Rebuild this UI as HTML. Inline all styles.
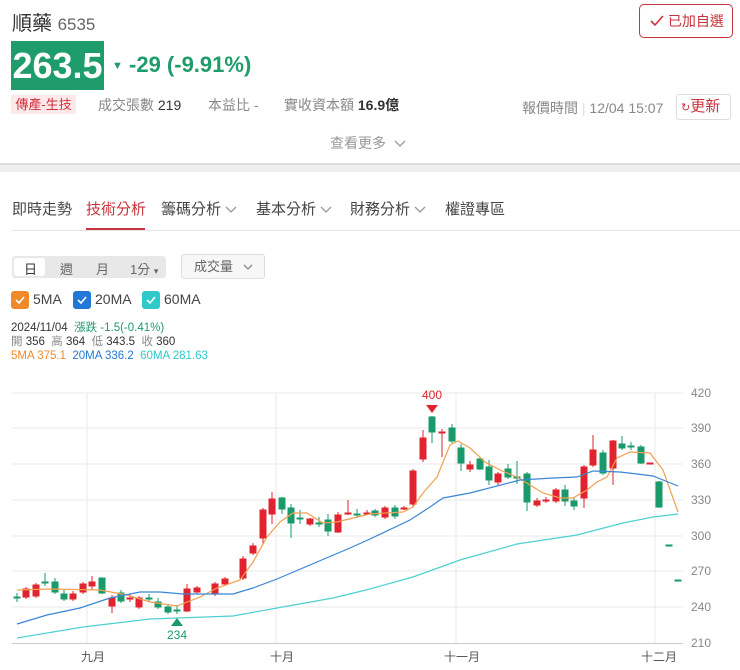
<!DOCTYPE html>
<html><head><meta charset="utf-8"><style>
*{margin:0;padding:0;box-sizing:border-box}
body{width:740px;height:670px;background:#fff;font-family:"Liberation Sans","Noto Sans CJK TC",sans-serif;position:relative;overflow:hidden;color:#333}
.a{position:absolute;white-space:nowrap}
.cb{position:absolute;width:18px;height:18px;border-radius:3px}
.cb svg{position:absolute;left:4px;top:5px}
</style></head><body>
<div class="a" style="left:12px;top:7px;font-size:20px;color:#333">順藥 <span style="font-size:17px;color:#666">6535</span></div>
<div class="a" style="left:639px;top:4px;width:94px;height:34px;border:1px solid #c8323c;border-radius:5px;color:#c8323c;font-size:14px;line-height:32px;padding-left:10px"><svg width="14" height="12" viewBox="0 0 14 12" style="vertical-align:-1px"><path d="M1 6 L5 10 L13 1" fill="none" stroke="#c8323c" stroke-width="1.6"/></svg> 已加自選</div>
<div class="a" style="left:11px;top:41px;width:93px;height:49px;background:#1e9c6c;color:#fff;font-size:36px;font-weight:bold;line-height:49px;text-align:center">263.5</div>
<div class="a" style="left:112px;top:52px;color:#1e9c6c;font-size:22px;font-weight:bold"><span style="font-size:11px;vertical-align:3px">▼</span> -29 (-9.91%)</div>
<div class="a" style="left:11px;top:95px;width:65px;height:19px;background:#fde8ea;color:#d0303c;font-size:13px;line-height:19px;text-align:center">傳產-生技</div>
<div class="a" style="left:98px;top:95px;font-size:14px;color:#888">成交張數 <span style="color:#333">219</span></div>
<div class="a" style="left:208px;top:95px;font-size:14px;color:#888">本益比 -</div>
<div class="a" style="left:284px;top:95px;font-size:14px;color:#888">實收資本額 <span style="color:#333;font-weight:bold">16.9億</span></div>
<div class="a" style="left:522px;top:98px;font-size:14px;color:#888">報價時間 <span style="color:#ddd">|</span> 12/04 15:07</div>
<div class="a" style="left:676px;top:94px;width:55px;height:26px;border:1px solid #ddd;border-radius:3px;font-size:15px;line-height:24px;color:#c8323c;padding-left:4px"><span style="font-size:11px">↻</span>更新</div>
<div class="a" style="left:330px;top:133px;font-size:14px;color:#999">查看更多 <svg width="12" height="8" viewBox="0 0 12 8" style="margin-left:4px"><path d="M1 1L6 6L11 1" fill="none" stroke="#999" stroke-width="1.3"/></svg></div>
<div class="a" style="left:0;top:163px;width:740px;height:9px;background:#eee;border-top:2px solid #ddd"></div>
<div class="a" style="left:12px;top:198px;font-size:15px;color:#444">即時走勢</div>
<div class="a" style="left:86px;top:198px;font-size:15px;color:#c8323c">技術分析</div>
<div class="a" style="left:86px;top:228px;width:59px;height:2px;background:#c8323c"></div>
<div class="a" style="left:161px;top:198px;font-size:15px;color:#444">籌碼分析 <svg width="12" height="8" viewBox="0 0 12 8"><path d="M1 1L6 6L11 1" fill="none" stroke="#999" stroke-width="1.3"/></svg></div>
<div class="a" style="left:256px;top:198px;font-size:15px;color:#444">基本分析 <svg width="12" height="8" viewBox="0 0 12 8"><path d="M1 1L6 6L11 1" fill="none" stroke="#999" stroke-width="1.3"/></svg></div>
<div class="a" style="left:350px;top:198px;font-size:15px;color:#444">財務分析 <svg width="12" height="8" viewBox="0 0 12 8"><path d="M1 1L6 6L11 1" fill="none" stroke="#999" stroke-width="1.3"/></svg></div>
<div class="a" style="left:445px;top:198px;font-size:15px;color:#444">權證專區</div>
<div class="a" style="left:12px;top:230px;width:728px;height:1px;background:#e5e5e5"></div>
<div class="a" style="left:12px;top:256px;width:154px;height:22px;background:#e8e8e8;border-radius:3px"></div>
<div class="a" style="left:14px;top:258px;width:31px;height:18px;background:#fff;border-radius:3px"></div>
<div class="a" style="left:24px;top:259px;font-size:13px;color:#333">日</div>
<div class="a" style="left:60px;top:259px;font-size:13px;color:#666">週</div>
<div class="a" style="left:96px;top:259px;font-size:13px;color:#666">月</div>
<div class="a" style="left:130px;top:259px;font-size:13px;color:#666">1分 <span style="font-size:9px">▾</span></div>
<div class="a" style="left:181px;top:254px;width:84px;height:25px;border:1px solid #ddd;border-radius:3px;background:#f7f7f7;font-size:13px;color:#666;line-height:23px;padding-left:12px">成交量 <svg width="10" height="7" viewBox="0 0 10 7" style="margin-left:6px"><path d="M1 1L5 5L9 1" fill="none" stroke="#888" stroke-width="1.3"/></svg></div>
<div class="cb" style="left:11px;top:291px;background:#f0892a"><svg width="10" height="8" viewBox="0 0 10 8"><path d="M1 4L4 7L9 1" fill="none" stroke="#fff" stroke-width="1.6"/></svg></div>
<div class="a" style="left:33px;top:291px;font-size:14px;color:#444">5MA</div>
<div class="cb" style="left:73px;top:291px;background:#2178d6"><svg width="10" height="8" viewBox="0 0 10 8"><path d="M1 4L4 7L9 1" fill="none" stroke="#fff" stroke-width="1.6"/></svg></div>
<div class="a" style="left:95px;top:291px;font-size:14px;color:#444">20MA</div>
<div class="cb" style="left:142px;top:291px;background:#2ec9c9"><svg width="10" height="8" viewBox="0 0 10 8"><path d="M1 4L4 7L9 1" fill="none" stroke="#fff" stroke-width="1.6"/></svg></div>
<div class="a" style="left:164px;top:291px;font-size:14px;color:#444">60MA</div>
<div class="a" style="left:11px;top:321px;font-size:11.5px;color:#333;line-height:14px">2024/11/04 &nbsp;<span style="color:#1e9c6c">漲跌 -1.5(-0.41%)</span><br><span style="color:#888">開</span> 356 &nbsp;<span style="color:#888">高</span> 364 &nbsp;<span style="color:#888">低</span> 343.5 &nbsp;<span style="color:#888">收</span> 360<br><span style="color:#f0892a">5MA 375.1</span> &nbsp;<span style="color:#2178d6">20MA 336.2</span> &nbsp;<span style="color:#2ec9c9">60MA 281.63</span></div>
<svg class="a" style="left:0;top:380px" width="740" height="290" viewBox="0 380 740 290">
<g stroke="#e8e8ea" stroke-width="1">
<path d="M12 393H683M12 428H683M12 464H683M12 500H683M12 536H683M12 571H683M12 607H683"/>
<path d="M87 393V643M276 393V643M456 393V643M655 393V643"/>
</g>
<path d="M12 643.5H683" stroke="#ccc"/>
<g font-size="12" fill="#888" font-family="Liberation Sans,sans-serif">
<text x="691" y="397">420</text><text x="691" y="432">390</text><text x="691" y="468">360</text><text x="691" y="504">330</text><text x="691" y="540">300</text><text x="691" y="575">270</text><text x="691" y="611">240</text><text x="691" y="647">210</text>
</g>
<g font-size="12" fill="#555" font-family="Liberation Sans,Noto Sans CJK TC,sans-serif" text-anchor="middle">
<text x="93" y="661">九月</text><text x="282" y="661">十月</text><text x="462" y="661">十一月</text><text x="659" y="661">十二月</text>
</g>
<g fill="#e0232e" stroke="#e0232e" stroke-width="1">
<path d="M26 587V599M36 583V598M73 591V601M83 582V594M92 576V590M112 595V613M130 594V602M139 596V609M187 584V612M197 586V594M215 582V596M225 577V586M243 556V580M253 543V555M263 508V544M272 492V524M310 518V526M338 512V533M348 500V515M367 510V515M385 506V519M404 506V510M413 469V507M423 430V462M442 429V457M470 461V472M498 472V485M537 498V507M546 497V503M556 488V503M584 465V508M593 435V467M613 440V485M650 463V464"/>
<rect x="23" y="589" width="6" height="8"/><rect x="33" y="585" width="6" height="11"/><rect x="70" y="594" width="6" height="5"/><rect x="80" y="584" width="6" height="8"/><rect x="89" y="582" width="6" height="4"/><rect x="109" y="598" width="6" height="8"/><rect x="127" y="598" width="6" height="1"/><rect x="136" y="598" width="6" height="9"/><rect x="184" y="589" width="6" height="22"/><rect x="194" y="588" width="6" height="4"/><rect x="212" y="584" width="6" height="10"/><rect x="222" y="579" width="6" height="5"/><rect x="240" y="559" width="6" height="19"/><rect x="250" y="546" width="6" height="7"/><rect x="260" y="510" width="6" height="28"/><rect x="269" y="499" width="6" height="15"/><rect x="307" y="519" width="6" height="5"/><rect x="335" y="515" width="6" height="17"/><rect x="345" y="513" width="6" height="1"/><rect x="364" y="513" width="6" height="1"/><rect x="382" y="508" width="6" height="9"/><rect x="401" y="508" width="6" height="1"/><rect x="410" y="471" width="6" height="33"/><rect x="420" y="438" width="6" height="21"/><rect x="439" y="432" width="6" height="1"/><rect x="467" y="465" width="6" height="4"/><rect x="495" y="474" width="6" height="8"/><rect x="534" y="501" width="6" height="4"/><rect x="543" y="500" width="6" height="1"/><rect x="553" y="490" width="6" height="11"/><rect x="581" y="467" width="6" height="31"/><rect x="590" y="450" width="6" height="15"/><rect x="610" y="441" width="6" height="27"/><rect x="647" y="463" width="6" height="1"/>
</g>
<g fill="#1a9a6a" stroke="#1a9a6a" stroke-width="1">
<path d="M17 593V602M45 573V586M55 578V594M64 590V601M102 578V594M121 590V603M149 594V602M158 598V609M168 604V614M177 605V614M282 497V514M291 504V538M300 510V524M319 517V527M328 514V536M357 509V518M375 509V517M395 505V519M432 416V443M452 424V443M461 444V471M480 458V470M489 460V485M508 464V479M517 461V484M527 472V511M565 485V506M574 498V510M603 450V475M622 436V450M631 442V450M641 445V464M659 481V508M669 545V546M678 580V581"/>
<rect x="14" y="597" width="6" height="1"/><rect x="42" y="582" width="6" height="1"/><rect x="52" y="582" width="6" height="10"/><rect x="61" y="594" width="6" height="5"/><rect x="99" y="578" width="6" height="15"/><rect x="118" y="593" width="6" height="8"/><rect x="146" y="598" width="6" height="1"/><rect x="155" y="602" width="6" height="5"/><rect x="165" y="607" width="6" height="5"/><rect x="174" y="610" width="6" height="1"/><rect x="279" y="498" width="6" height="11"/><rect x="288" y="508" width="6" height="15"/><rect x="297" y="518" width="6" height="1"/><rect x="316" y="523" width="6" height="1"/><rect x="325" y="520" width="6" height="11"/><rect x="354" y="514" width="6" height="1"/><rect x="372" y="511" width="6" height="4"/><rect x="392" y="508" width="6" height="8"/><rect x="429" y="417" width="6" height="15"/><rect x="449" y="428" width="6" height="13"/><rect x="458" y="448" width="6" height="15"/><rect x="477" y="459" width="6" height="10"/><rect x="486" y="467" width="6" height="13"/><rect x="505" y="469" width="6" height="8"/><rect x="514" y="477" width="6" height="1"/><rect x="524" y="474" width="6" height="28"/><rect x="562" y="490" width="6" height="11"/><rect x="571" y="501" width="6" height="5"/><rect x="600" y="453" width="6" height="20"/><rect x="619" y="444" width="6" height="4"/><rect x="628" y="446" width="6" height="1"/><rect x="638" y="447" width="6" height="16"/><rect x="656" y="482" width="6" height="25"/><rect x="666" y="545" width="6" height="1"/><rect x="675" y="580" width="6" height="1"/>
</g>
<polyline fill="none" stroke="#f0a050" stroke-width="1.2" points="17,590 50,589 100,590 127,595 150,602 177,606 200,597 217,588 240,580 253,562 267,537 280,522 293,513 307,513 323,523 337,522 353,518 370,514 403,512 413,507 423,493 437,477 450,445 458,441 470,448 485,462 500,470 517,477 530,485 543,493 560,498 573,498 587,490 597,482 607,477 617,458 630,452 650,453 663,470 678,512"/>
<polyline fill="none" stroke="#3a86d8" stroke-width="1.2" points="17,624 47,615 80,608 110,598 140,592 160,592 183,594 233,594 253,588 277,579 317,562 350,548 370,539 410,520 430,507 443,498 470,493 520,480 553,478 577,477 593,471 620,472 637,474 653,476 678,486"/>
<polyline fill="none" stroke="#4fd0d0" stroke-width="1.2" points="17,638 83,627 150,619 233,616 277,608 333,598 370,589 413,577 460,560 517,544 577,535 623,523 653,517 678,514"/>
<path d="M426 405L438 405L432 413Z" fill="#e0232e"/>
<text x="432" y="399" font-size="12" fill="#e0232e" text-anchor="middle" font-family="Liberation Sans,sans-serif">400</text>
<path d="M171 626L183 626L177 618Z" fill="#1a9a6a"/>
<text x="177" y="639" font-size="12" fill="#1a9a6a" text-anchor="middle" font-family="Liberation Sans,sans-serif">234</text>
</svg>
</body></html>
